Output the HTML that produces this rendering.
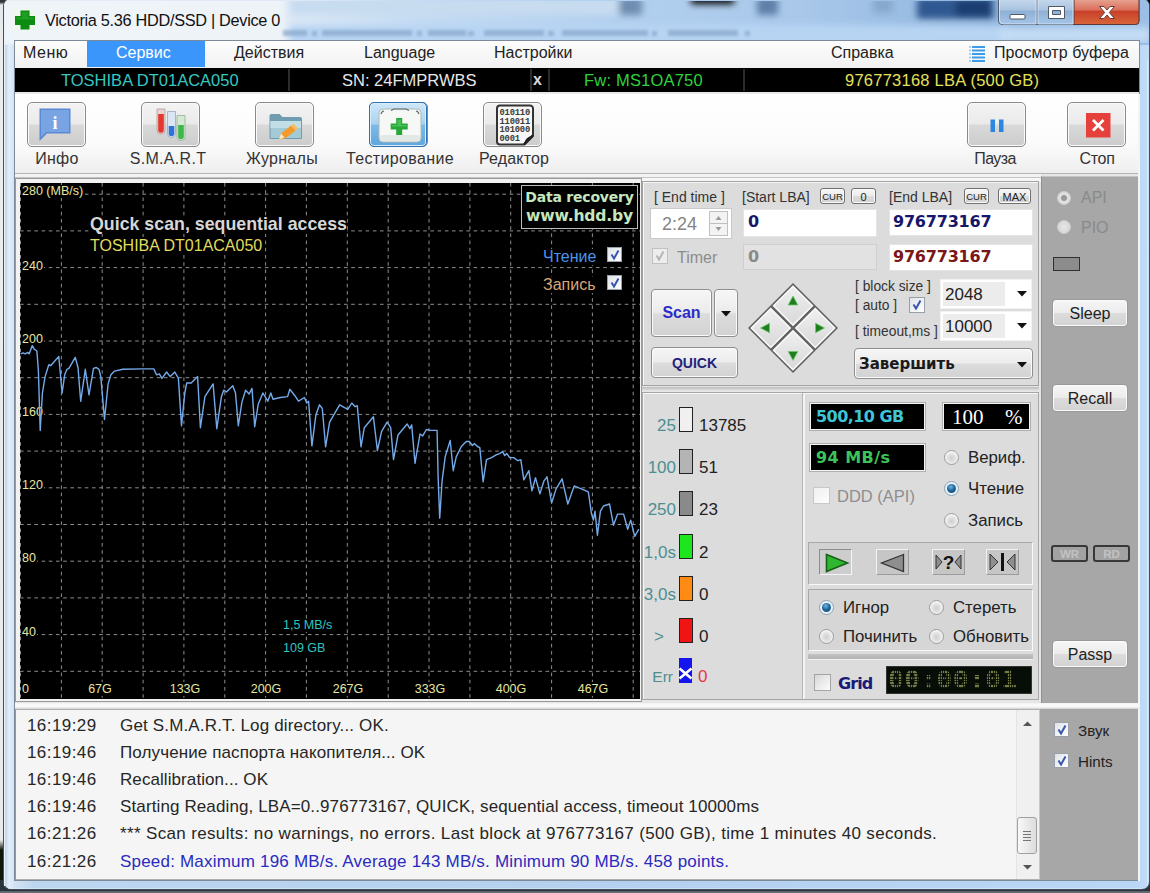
<!DOCTYPE html>
<html lang="ru"><head><meta charset="utf-8"><title>Victoria 5.36 HDD/SSD | Device 0</title>
<style>
*{box-sizing:border-box;margin:0;padding:0}
html,body{width:1150px;height:893px;overflow:hidden}
body{position:relative;background:#e9edf1;font-family:"Liberation Sans","DejaVu Sans",sans-serif;font-size:16px;color:#222}
.a{position:absolute}
.t{position:absolute;white-space:nowrap;line-height:1}
#win{left:3px;top:-2px;width:1147px;height:892px;border-radius:8px;border:1px solid #46505a;background:linear-gradient(90deg,#b4cbe8 0,#e4eef9 5px,#d4e3f4 10px,#bdd6f0 30px,#b4d0ee 600px,#b9d6f5 1130px,#c4ddf7 1147px);overflow:hidden}
#titlebg{left:-4px;top:0;width:1150px;height:46px;background:linear-gradient(90deg,#e6eef7 0px,#dfeaf6 280px,#c4dbf3 420px,#b3d0ef 600px,#a9c8ea 800px,#8db4de 1000px,#9cbfe6 1150px)}
#client{left:14px;top:40px;width:1126px;height:841px;background:#d9d9d9;border:1px solid #7d8a99}
.btn{position:absolute;border:1px solid #8e8e8e;border-radius:4px;background:linear-gradient(#f6f6f6 0%,#ececec 48%,#dcdcdc 52%,#d2d2d2 100%);box-shadow:inset 0 0 0 1px #fbfbfb}
.btn .t{left:0;right:0;text-align:center}
.tb{position:absolute;width:59px;height:45px;border:1px solid #8a8a8a;border-radius:5px;background:linear-gradient(#f3f3f3 0%,#eaeaea 49%,#d9d9d9 51%,#cccccc 100%);box-shadow:inset 0 0 0 1px #fafafa}
.tbl{position:absolute;white-space:nowrap;line-height:1;font-size:16px;color:#333;text-align:center;width:140px;letter-spacing:.3px}
.lbl{position:absolute;white-space:nowrap;line-height:1;font-size:14px;color:#333}
.inp{position:absolute;background:#fff;border:1px solid #e4e4e4}
.num{position:absolute;white-space:nowrap;line-height:1;font-family:"DejaVu Sans","Liberation Sans",sans-serif;font-weight:bold;font-size:16px;letter-spacing:-0.2px}
.radio{position:absolute;width:15px;height:15px;border-radius:50%;border:1px solid #9c9c9c;background:radial-gradient(circle at 50% 55%,#cfcfcf 0%,#e2e2e2 40%,#fafafa 75%,#f0f0f0 100%)}
.radio.on{background:radial-gradient(circle at 50% 50%,#e6f2fa 0%,#e9f3fa 70%,#cfdfea 100%);border-color:#8fa2b2}
.radio.on::after{content:"";position:absolute;left:2px;top:2px;width:9px;height:9px;border-radius:50%;background:radial-gradient(circle at 42% 32%,#6fb6e2 0%,#22699c 45%,#123f66 100%)}
.cb{position:absolute;width:16px;height:16px;border:1px solid #9aa0a8;background:linear-gradient(135deg,#dfe3e8,#ffffff)}
.cb svg{position:absolute;left:1px;top:1px}
.bar{position:absolute;width:14px;height:25px;border:1px solid #222}
.stl{position:absolute;white-space:nowrap;line-height:1;font-size:17px;color:#4d8f90;text-align:right;width:40px}
.stv{position:absolute;white-space:nowrap;line-height:1;font-size:17px;color:#222}
.disp{position:absolute;background:#000;border:1px solid #f4f4f4;outline:1px solid #b0b0b0}
.sunk{position:absolute;border:1px solid;border-color:#a9a9a9 #f8f8f8 #f8f8f8 #a9a9a9}
.pbtn{position:absolute;width:33px;height:26px;background:#c6c6c6;border:1px solid;border-color:#f2f2f2 #9c9c9c #9c9c9c #f2f2f2}
.log{position:absolute;white-space:nowrap;line-height:1;font-size:17px;color:#262626}
</style></head>
<body>
<div class="a" style="left:0;top:0;width:8px;height:893px;background:linear-gradient(#30353a 0,#30353a 2px,#e4e6e8 5px,#ececec 40px,#e9e9e9 840px,#10180c 850px,#10180c 880px,#6a737b 890px)"></div>
<div class="a" style="left:1140px;top:0;width:10px;height:893px;background:linear-gradient(#05070a 0,#0a0e14 40px,#5e6f84 60px,#b9cde2 90px,#a7bdd6 170px,#6f8196 200px,#a9c3de 240px,#bdd7f1 500px,#b2cfee 840px,#4c5866 880px,#2a3038 893px)"></div>
<div class="a" style="left:0;top:880px;width:1150px;height:13px;background:linear-gradient(#2c333a 0,#2c333a 11px,#5c656e 11.5px,#6a737c 13px)"></div>
<div class="a" id="win"><div class="a" id="titlebg"></div>
<svg class="a" style="left:-4px;top:2px" width="1150" height="42" viewBox="0 0 1150 42">
<defs><filter id="bl" x="-20%" y="-80%" width="140%" height="260%"><feGaussianBlur stdDeviation="3.5"/></filter>
<filter id="bl2" x="-20%" y="-50%" width="140%" height="200%"><feGaussianBlur stdDeviation="1.8"/></filter></defs>
<g filter="url(#bl)">
<rect x="0" y="-6" width="285" height="50" fill="#f0f4f9" opacity="0.92"/>
<rect x="290" y="-4" width="330" height="18" fill="#c8dcf0"/>
<rect x="619" y="-4" width="23" height="18" fill="#6d8db0"/>
<rect x="691" y="-6" width="43" height="9" fill="#000"/>
<rect x="757" y="-4" width="21" height="18" fill="#5f7fa8"/>
<rect x="873" y="-4" width="20" height="16" fill="#86a8cc"/>
<rect x="917" y="-4" width="76" height="22" fill="#2f5890"/>
<rect x="956" y="-2" width="36" height="18" fill="#1e3e70"/>
<rect x="290" y="24" width="720" height="20" fill="#b7d4f3"/>
<rect x="1000" y="26" width="150" height="16" fill="#c3dbf4"/>
</g>
<g filter="url(#bl2)" fill="#86a4c8" opacity="0.7">
<rect x="283" y="29" width="24" height="6"/><rect x="322" y="29" width="90" height="6"/><rect x="428" y="29" width="38" height="6"/><rect x="484" y="29" width="60" height="6"/><rect x="562" y="29" width="86" height="6"/><rect x="668" y="29" width="70" height="6"/>
<rect x="468" y="30" width="6" height="5"/><rect x="548" y="30" width="6" height="5"/><rect x="312" y="30" width="5" height="5"/><rect x="417" y="30" width="5" height="5"/><rect x="652" y="30" width="5" height="5"/><rect x="745" y="30" width="5" height="5"/>
</g>
</svg></div>
<div class="a" style="left:4px;top:6px;width:1px;height:880px;background:#e8f2fb"></div>
<div class="a" style="left:1147px;top:60px;width:1px;height:826px;background:#dcecfb;opacity:.8"></div>
<div class="a" style="left:8px;top:888px;width:1134px;height:1px;background:#dcecfb;opacity:.6"></div>
<svg class="a" style="left:14px;top:9px" width="22" height="21" viewBox="0 0 22 21"><rect width="22" height="21" fill="#eef6ee"/><path d="M6.5 1.5h9v5.5h5.5v9h-5.5v4.5h-9v-4.5h-5.5v-9h5.5z" fill="#0d8c12"/><path d="M8 3h6v5.5h5.5v2h-17v-2h5.5z" fill="#2fae30" opacity=".55"/></svg>
<div class="t" style="left:45px;top:12px;font-size:16.3px;color:#111;letter-spacing:-0.3px">Victoria 5.36 HDD/SSD | Device 0</div>
<svg class="a" style="left:997px;top:0" width="146" height="28" viewBox="0 0 146 28">
<defs>
<linearGradient id="cg" x1="0" y1="0" x2="0" y2="1"><stop offset="0" stop-color="#c9dbee"/><stop offset=".45" stop-color="#a9c3e0"/><stop offset=".5" stop-color="#8fb0d6"/><stop offset="1" stop-color="#a6c6e8"/></linearGradient>
<linearGradient id="cr" x1="0" y1="0" x2="0" y2="1"><stop offset="0" stop-color="#e9a99a"/><stop offset=".45" stop-color="#d9705a"/><stop offset=".5" stop-color="#c8402a"/><stop offset="1" stop-color="#d8663a"/></linearGradient>
</defs>
<path d="M1.5 -2V21a3.5 3.5 0 0 0 3.5 3.5H138.5a3.5 3.5 0 0 0 3.5 -3.5V-2z" fill="url(#cg)" stroke="#4f5d6e" stroke-width="1"/>
<path d="M77 -2V24.5H138.5a3.5 3.5 0 0 0 3.5 -3.5V-2z" fill="url(#cr)" stroke="#5a3a36" stroke-width="1"/>
<path d="M40 -2V24.5" stroke="#4f5d6e" stroke-width="1"/>
<path d="M2.5 -2V20a4 4 0 0 0 4 4H39V-2z M41 -2V24H76V-2z" fill="none" stroke="#e6f0fa" stroke-width="1" opacity=".7"/>
<rect x="13" y="14.5" width="15" height="4.5" rx="1" fill="#fff" stroke="#505a66" stroke-width="1"/>
<path d="M51.5 6.5h16v12h-16z M55.5 10.5v4h8v-4z" fill="#fff" fill-rule="evenodd" stroke="#505a66" stroke-width="1"/>
<path d="M102.5 6.5l4.5 0 3 3.5 3 -3.5 4.5 0 -5.2 6 5.2 6 -4.5 0 -3 -3.5 -3 3.5 -4.5 0 5.2 -6z" fill="#fff" stroke="#6a3a36" stroke-width="1"/>
</svg>
<div class="a" id="client"></div>
<div class="a" style="left:15px;top:41px;width:1124px;height:27px;background:linear-gradient(#fdfdfd,#f1f1f1)"></div>
<div class="a" style="left:87px;top:41px;width:118px;height:26px;background:#3a96fb"></div>
<div class="t" style="left:23px;top:45px;font-size:16px;color:#222;letter-spacing:0.5px">Меню</div>
<div class="t" style="left:116px;top:45px;font-size:16px;color:#ffffff;letter-spacing:0px">Сервис</div>
<div class="t" style="left:234px;top:45px;font-size:16px;color:#222;letter-spacing:0px">Действия</div>
<div class="t" style="left:364px;top:45px;font-size:16px;color:#222;letter-spacing:0px">Language</div>
<div class="t" style="left:494px;top:45px;font-size:16px;color:#222;letter-spacing:0px">Настройки</div>
<div class="t" style="left:831px;top:45px;font-size:16px;color:#222;letter-spacing:0px">Справка</div>
<div class="t" style="left:994px;top:45px;font-size:16px;color:#222;letter-spacing:0.07px">Просмотр буфера</div>
<svg class="a" style="left:968px;top:45px" width="18" height="20" viewBox="0 0 18 20"><g stroke="#3b9be8" stroke-width="2"><path d="M4 2h13M4 5.5h13M4 9h13M4 12.5h13M4 16h13"/></g><g stroke="#8cc4f2" stroke-width="1.5"><path d="M1 2h2M1 5.5h2M1 9h2M1 12.5h2M1 16h2"/></g></svg>
<div class="a" style="left:15px;top:68px;width:1124px;height:24px;background:#000"></div>
<div class="a" style="left:288px;top:69px;width:2px;height:22px;background:#2c2c2c"></div>
<div class="a" style="left:530px;top:69px;width:2px;height:22px;background:#2c2c2c"></div>
<div class="a" style="left:548px;top:69px;width:2px;height:22px;background:#2c2c2c"></div>
<div class="a" style="left:743px;top:69px;width:2px;height:22px;background:#2c2c2c"></div>
<div class="t" style="left:61px;top:72px;font-size:16.5px;color:#35c7c0">TOSHIBA DT01ACA050</div>
<div class="t" style="left:342px;top:72px;font-size:16.5px;color:#e8e8e8">SN: 24FMPRWBS</div>
<div class="t" style="left:533px;top:72px;font-size:16px;color:#d8d8d8;font-weight:bold">x</div>
<div class="t" style="left:584px;top:72px;font-size:16.5px;letter-spacing:.2px;color:#2fd23a">Fw: MS1OA750</div>
<div class="t" style="left:845px;top:72px;font-size:16.5px;letter-spacing:.24px;color:#e6e05a">976773168 LBA (500 GB)</div>
<div class="a" style="left:15px;top:92px;width:1124px;height:2px;background:#e9e9e9"></div>
<div class="a" style="left:15px;top:94px;width:1124px;height:80px;background:linear-gradient(#ffffff 0,#fbfbfb 50px,#eeeeee 80px)"></div>
<div class="a" style="left:15px;top:173px;width:1124px;height:1px;background:#b4b4b4"></div>
<div class="tb" style="left:27px;top:102px"></div>
<svg class="a" style="left:27px;top:102px" width="58" height="45" viewBox="0 0 58 45"><path d="M12.5 6.5h31v25h-23.5l-7.5 7.5z" fill="#5a8ad4"/><path d="M14 8h28v22h-23l-5 5z" fill="#78a4e4"/><text x="28" y="27" font-family="Liberation Serif,serif" font-weight="bold" font-size="18" fill="#fff" text-anchor="middle">i</text></svg>
<div class="tbl" style="left:-13px;top:151px;letter-spacing:0.3px">Инфо</div>
<div class="tb" style="left:141px;top:102px"></div>
<svg class="a" style="left:141px;top:102px" width="58" height="45" viewBox="0 0 58 45"><g><path d="M16 7h8v21a4 4 0 0 1 -8 0z" fill="#ecd2d2" stroke="#b49c9c" stroke-width=".8"/><path d="M17.2 12h5.6v16a2.8 2.8 0 0 1 -5.6 0z" fill="#e2382e"/>
<path d="M26.5 9.5h8v22a4 4 0 0 1 -8 0z" fill="#dbe6f4" stroke="#98a8c0" stroke-width=".8"/><path d="M27.7 24h5.6v7.5a2.8 2.8 0 0 1 -5.6 0z" fill="#2d74d6"/>
<path d="M36 13.5h8v21a4 4 0 0 1 -8 0z" fill="#d4ead4" stroke="#94b094" stroke-width=".8"/><path d="M37.2 23h5.6v11.5a2.8 2.8 0 0 1 -5.6 0z" fill="#3cb848"/></g></svg>
<div class="tbl" style="left:98px;top:151px;letter-spacing:0.3px">S.M.A.R.T</div>
<div class="tb" style="left:255px;top:102px"></div>
<svg class="a" style="left:255px;top:102px" width="58" height="45" viewBox="0 0 58 45"><path d="M14.5 14a2 2 0 0 1 2 -2h8l3 3h17.5a2 2 0 0 1 2 2v19a1 1 0 0 1 -1 1h-30.5a1 1 0 0 1 -1 -1z" fill="#6f9cae"/><path d="M15.5 19h30.5v17h-30.5z" fill="#a4cad6"/><path d="M15.5 19h30.5v7h-30.5z" fill="#c2dfe8"/>
<path d="M24 37.5l2 -6 10 -8 4.5 5 -10.5 8z" fill="#f39a28"/><path d="M24 37.5l2 -6 3.5 4z" fill="#f6e6cc"/><path d="M36 23.5l2.5 -2 4.5 5 -2.5 2z" fill="#f8bc66"/></svg>
<div class="tbl" style="left:212px;top:151px;letter-spacing:0.3px">Журналы</div>
<div class="tb" style="left:369px;top:102px"></div>
<svg class="a" style="left:369px;top:102px" width="58" height="45" viewBox="0 0 58 45"><rect x="10" y="7" width="42" height="33" rx="4" fill="#f6f8f6" stroke="#aebcb8"/><path d="M12 12q1 -3 3 -3M50 12q-1 -3 -3 -3M22 8.5l3 -1.5h12l3 1.5" fill="none" stroke="#5a6a66" stroke-width="1.2"/><rect x="11" y="33" width="40" height="6" rx="2" fill="#e3e9e6"/>
<path d="M27.2 16h6v5.5h5.5v6h-5.5v5.5h-6v-5.5h-5.5v-6h5.5z" fill="#25a838"/><path d="M28.5 17.5h3.5v5.5h5.5v1.5h-14.5v-1.5h5.5z" fill="#5fd068" opacity=".6"/></svg>
<div class="tbl" style="left:330px;top:151px;letter-spacing:0.36px">Тестирование</div>
<div class="tb" style="left:483px;top:102px"></div>
<svg class="a" style="left:483px;top:102px" width="58" height="45" viewBox="0 0 58 45"><path d="M17 3.5h30a3 3 0 0 1 3 3v27l-9 9h-24a3 3 0 0 1 -3 -3v-33a3 3 0 0 1 3 -3z" fill="#f7f7f7" stroke="#333" stroke-width="2"/><path d="M50 33.5c-5 1 -8 3 -9 9z" fill="#222"/><path d="M50 33.5l-9 9" stroke="#222" stroke-width="2.5"/>
<g font-family="Liberation Mono,monospace" font-size="8.8" font-weight="bold" fill="#3a3a3a" letter-spacing="-.2"><text x="16.5" y="13">010110</text><text x="16.5" y="21.5">110011</text><text x="16.5" y="30">101000</text><text x="16.5" y="38.5">0001</text></g></svg>
<div class="tbl" style="left:444px;top:151px;letter-spacing:0.14px">Редактор</div>
<div class="tb" style="left:967px;top:102px"></div>
<svg class="a" style="left:967px;top:102px" width="58" height="45" viewBox="0 0 58 45"><rect x="23.5" y="17.5" width="4.5" height="12.5" fill="#2a86de"/><rect x="32" y="17.5" width="4.5" height="12.5" fill="#2a86de"/></svg>
<div class="tbl" style="left:925px;top:151px;letter-spacing:-0.6px">Пауза</div>
<div class="tb" style="left:1067px;top:102px"></div>
<svg class="a" style="left:1067px;top:102px" width="58" height="45" viewBox="0 0 58 45"><rect x="19" y="11" width="24.5" height="24.5" fill="#e6403c"/><path d="M26 18l10.5 10.5M36.5 18l-10.5 10.5" stroke="#fff" stroke-width="2.8"/></svg>
<div class="tbl" style="left:1027px;top:151px;letter-spacing:-0.3px">Стоп</div>
<div class="a" style="left:369px;top:102px;width:58px;height:45px;border:1px solid #2e72b4;border-radius:5px;background:linear-gradient(#cfe7f8 0%,#a9d3f1 49%,#7dbae8 51%,#5ea6de 100%);box-shadow:inset 0 0 0 1px #d8eefc"></div>
<svg class="a" style="left:369px;top:102px" width="58" height="45" viewBox="0 0 58 45"><rect x="10" y="7" width="42" height="33" rx="4" fill="#f6f8f6" stroke="#aebcb8"/><path d="M12 12q1 -3 3 -3M50 12q-1 -3 -3 -3M22 8.5l3 -1.5h12l3 1.5" fill="none" stroke="#5a6a66" stroke-width="1.2"/><rect x="11" y="33" width="40" height="6" rx="2" fill="#e3e9e6"/>
<path d="M27.2 16h6v5.5h5.5v6h-5.5v5.5h-6v-5.5h-5.5v-6h5.5z" fill="#25a838"/><path d="M28.5 17.5h3.5v5.5h5.5v1.5h-14.5v-1.5h5.5z" fill="#5fd068" opacity=".6"/></svg>
<div class="a" style="left:15px;top:174px;width:1124px;height:533px;background:#e6e6e6"></div>
<div class="a" style="left:15px;top:174px;width:1026px;height:8px;background:linear-gradient(#f6f6f6 0,#f2f2f2 3px,#c4c4c4 3px,#c4c4c4 4px,#f8f8f8 4px,#f4f4f4 8px)"></div>
<div class="a" style="left:15px;top:178px;width:627px;height:524px;background:#f2f2f2;border:1px solid #9a9a9a"></div>
<div class="a" style="left:20px;top:183px;width:620px;height:516px;background:#000"></div>
<svg class="a" style="left:20px;top:183px" width="620" height="516" viewBox="0 0 620 516"><g stroke="#8e8e8e" stroke-width="1" stroke-dasharray="3.6 3.6" fill="none"><path d="M0 11.2H620"/><path d="M0 47.9H620"/><path d="M0 84.6H620"/><path d="M0 121.3H620"/><path d="M0 158.0H620"/><path d="M0 194.7H620"/><path d="M0 231.4H620"/><path d="M0 268.1H620"/><path d="M0 304.8H620"/><path d="M0 341.5H620"/><path d="M0 378.2H620"/><path d="M0 414.9H620"/><path d="M0 451.6H620"/><path d="M0 488.3H620"/><path d="M0.5 0V516"/><path d="M41.4 0V516"/><path d="M82.2 0V516"/><path d="M123.1 0V516"/><path d="M163.9 0V516"/><path d="M204.8 0V516"/><path d="M245.6 0V516"/><path d="M286.4 0V516"/><path d="M327.3 0V516"/><path d="M368.2 0V516"/><path d="M409.0 0V516"/><path d="M449.9 0V516"/><path d="M490.7 0V516"/><path d="M531.6 0V516"/><path d="M572.4 0V516"/><path d="M613.2 0V516"/></g></svg>
<div class="t" style="left:21px;top:185px;font-size:12.5px;color:#e6e6a0;background:#000;padding:0 1px">280 (MB/s)</div>
<div class="t" style="left:21px;top:260px;font-size:12.5px;color:#e6e6a0;background:#000;padding:0 1px">240</div>
<div class="t" style="left:21px;top:333px;font-size:12.5px;color:#e6e6a0;background:#000;padding:0 1px">200</div>
<div class="t" style="left:21px;top:406px;font-size:12.5px;color:#e6e6a0;background:#000;padding:0 1px">160</div>
<div class="t" style="left:21px;top:479px;font-size:12.5px;color:#e6e6a0;background:#000;padding:0 1px">120</div>
<div class="t" style="left:21px;top:552px;font-size:12.5px;color:#e6e6a0;background:#000;padding:0 1px">80</div>
<div class="t" style="left:21px;top:626px;font-size:12.5px;color:#e6e6a0;background:#000;padding:0 1px">40</div>
<div class="t" style="left:21px;top:683px;font-size:12.5px;color:#e6e6a0;background:#000;padding:0 1px">0</div>
<div class="t" style="left:80px;top:683px;width:40px;text-align:center;font-size:12.5px;color:#e6e6a0"><span style="background:#000;padding:0 1px">67G</span></div>
<div class="t" style="left:165px;top:683px;width:40px;text-align:center;font-size:12.5px;color:#e6e6a0"><span style="background:#000;padding:0 1px">133G</span></div>
<div class="t" style="left:246px;top:683px;width:40px;text-align:center;font-size:12.5px;color:#e6e6a0"><span style="background:#000;padding:0 1px">200G</span></div>
<div class="t" style="left:328px;top:683px;width:40px;text-align:center;font-size:12.5px;color:#e6e6a0"><span style="background:#000;padding:0 1px">267G</span></div>
<div class="t" style="left:410px;top:683px;width:40px;text-align:center;font-size:12.5px;color:#e6e6a0"><span style="background:#000;padding:0 1px">333G</span></div>
<div class="t" style="left:491px;top:683px;width:40px;text-align:center;font-size:12.5px;color:#e6e6a0"><span style="background:#000;padding:0 1px">400G</span></div>
<div class="t" style="left:573px;top:683px;width:40px;text-align:center;font-size:12.5px;color:#e6e6a0"><span style="background:#000;padding:0 1px">467G</span></div>
<svg class="a" style="left:20px;top:183px" width="620" height="516" viewBox="0 0 620 516"><polyline fill="none" stroke="#74aaea" stroke-width="1.4" stroke-linejoin="round" points="0.5,170.8 3.2,169.9 5.0,170.8 7.8,169.5 9.2,170.8 12.3,162.6 14.2,166.2 16.9,168.0 18.4,188.1 20.2,247.5 22.4,210.0 25.1,193.6 28.8,181.7 30.6,182.7 38.8,173.5 42.1,210.0 44.7,191.8 47.0,186.3 48.9,185.4 55.3,174.4 58.0,184.5 60.7,218.3 65.3,186.3 69.0,211.9 73.5,185.4 76.3,184.5 79.0,186.3 80.8,193.6 84.5,236.5 88.1,200.9 90.9,191.8 94.5,188.1 102.7,186.3 122.8,185.9 133.8,185.9 136.5,191.8 139.3,190.9 142.0,195.4 146.6,189.0 150.2,193.6 154.8,189.0 158.4,195.4 161.5,242.9 164.8,210.0 166.7,200.0 171.2,200.0 177.6,193.6 180.4,244.7 184.9,213.7 193.1,200.9 196.8,245.7 201.4,213.7 203.7,207.2 206.4,209.0 212.8,202.7 215.5,210.0 218.3,242.8 221.9,219.1 225.6,207.2 229.2,210.9 232.0,205.4 234.7,243.7 238.3,220.9 242.9,210.0 247.8,218.2 250.8,210.0 253.0,216.3 260.3,214.5 267.6,213.6 269.8,206.3 274.9,212.7 278.5,218.2 284.4,214.5 286.7,220.0 288.6,218.2 291.9,262.9 295.9,231.9 299.5,221.8 302.3,225.5 305.6,263.8 309.6,239.2 319.6,221.8 327.8,226.4 331.8,220.0 335.1,223.7 337.3,222.7 341.0,263.8 344.3,244.7 353.4,233.7 357.4,267.5 361.6,248.3 367.1,239.2 370.7,244.7 373.5,276.6 378.0,252.0 387.2,241.0 389.9,245.6 391.7,241.9 395.0,280.3 400.0,251.0 402.7,252.9 406.4,246.5 410.0,247.4 417.1,247.4 418.1,293.8 419.7,335.1 422.1,297.8 425.2,273.6 430.2,257.5 433.2,287.7 436.3,273.6 441.3,263.5 446.3,258.5 449.4,258.5 452.4,262.5 454.4,260.5 457.4,263.5 459.8,264.6 463.1,298.8 466.5,276.7 471.5,274.6 476.6,271.6 479.6,270.6 482.6,268.6 484.7,272.6 486.7,270.6 489.7,274.6 493.7,274.6 497.8,277.7 500.8,276.7 503.8,296.8 508.9,287.7 511.9,307.9 515.5,294.8 519.9,310.9 524.0,297.8 527.0,293.8 531.6,320.0 536.1,305.9 542.1,295.8 547.8,321.0 554.2,302.9 561.3,305.9 568.3,308.9 571.4,330.1 573.4,337.1 575.0,328.1 577.4,352.3 580.4,328.1 583.5,323.0 589.5,321.0 593.5,342.2 597.6,331.1 603.6,331.1 607.7,346.2 610.7,337.1 614.7,353.3 618.8,346.2"/></svg>
<div class="t" style="left:90px;top:216px;font-size:17.8px;font-weight:bold;color:#d6d6d6;background:#000">Quick scan, sequential access</div>
<div class="t" style="left:90px;top:238px;font-size:16px;color:#e0dc5c;background:#000">TOSHIBA DT01ACA050</div>
<div class="a" style="left:521px;top:185px;width:117px;height:44px;background:#000;border:1.5px solid #bdbdbd"></div>
<div class="t" style="left:521px;top:188px;width:117px;text-align:center;font-family:'DejaVu Sans','Liberation Sans',sans-serif;font-weight:bold;font-size:14px;color:#c6e6be;line-height:18.5px;white-space:normal;letter-spacing:-0.2px">Data recovery<br><span style="font-size:15.6px">www.hdd.by</span></div>
<div class="t" style="left:543px;top:249px;font-size:16px;color:#4a94ea;background:#000">Чтение</div>
<div class="t" style="left:543px;top:277px;font-size:16px;color:#d8a878;background:#000">Запись</div>
<div class="cb" style="left:607px;top:247px;width:15px;height:15px"><svg width="12" height="12" viewBox="0 0 12 12"><path d="M2.5 5.5l2.5 4 4.5 -8" fill="none" stroke="#3a56b0" stroke-width="2"/></svg></div>
<div class="cb" style="left:607px;top:275px;width:15px;height:15px"><svg width="12" height="12" viewBox="0 0 12 12"><path d="M2.5 5.5l2.5 4 4.5 -8" fill="none" stroke="#3a56b0" stroke-width="2"/></svg></div>
<div class="t" style="left:283px;top:619px;font-size:12.5px;color:#2fc4c0;background:#000">1,5 MB/s</div>
<div class="t" style="left:283px;top:642px;font-size:12.5px;color:#2fc4c0;background:#000">109 GB</div>
<div class="a" style="left:642px;top:181px;width:397px;height:205px;background:#dcdcdc;border:1px solid #a2a2a2;box-shadow:inset 1px 1px 0 #f6f6f6"></div>
<div class="lbl" style="left:654px;top:190px;font-size:14px">[ End time ]</div>
<div class="lbl" style="left:742px;top:190px;font-size:14px">[Start LBA]</div>
<div class="lbl" style="left:889px;top:190px;font-size:14px">[End LBA]</div>
<div class="btn" style="left:820px;top:188px;width:25px;height:16px;border-color:#707070;border-radius:3px"><div class="t" style="top:3px;font-size:9.5px;color:#222">CUR</div></div>
<div class="btn" style="left:851px;top:188px;width:25px;height:16px;border-color:#707070;border-radius:3px"><div class="t" style="top:3px;font-size:11px;color:#222">0</div></div>
<div class="btn" style="left:964px;top:188px;width:25px;height:16px;border-color:#707070;border-radius:3px"><div class="t" style="top:3px;font-size:9.5px;color:#222">CUR</div></div>
<div class="btn" style="left:998px;top:188px;width:33px;height:16px;border-color:#707070;border-radius:3px"><div class="t" style="top:3px;font-size:11px;color:#222">MAX</div></div>
<div class="inp" style="left:650px;top:208px;width:82px;height:31px;border-color:#c9c9c9"></div>
<div class="t" style="left:662px;top:215px;font-size:18px;color:#858585">2:24</div>
<div class="a" style="left:709px;top:211px;width:19px;height:25px;border:1px solid #c0c0c0;background:#f3f3f3"></div>
<div class="a" style="left:710px;top:223px;width:17px;height:1px;background:#c0c0c0"></div>
<svg class="a" style="left:709px;top:211px" width="19" height="25"><path d="M6.5 9l3 -4 3 4z M6.5 16l3 4 3 -4z" fill="#9a9a9a"/></svg>
<div class="inp" style="left:743px;top:209px;width:134px;height:28px"></div>
<div class="num" style="left:748px;top:214px;color:#16166a">0</div>
<div class="inp" style="left:889px;top:209px;width:144px;height:27px"></div>
<div class="num" style="left:893px;top:214px;color:#16166a">976773167</div>
<div class="inp" style="left:743px;top:244px;width:134px;height:26px;background:#e2e2e2;border-color:#cfcfcf"></div>
<div class="num" style="left:748px;top:249px;color:#8a8a8a">0</div>
<div class="inp" style="left:889px;top:244px;width:144px;height:27px"></div>
<div class="num" style="left:893px;top:249px;color:#7a1616">976773167</div>
<div class="cb" style="left:652px;top:248px;border-color:#c2c2c2;background:#ededed"><svg width="12" height="12" viewBox="0 0 12 12"><path d="M2.5 5.5l2.5 4 4.5 -8" fill="none" stroke="#b4b4b4" stroke-width="2"/></svg></div>
<div class="t" style="left:677px;top:250px;font-size:16px;color:#8c8c8c">Timer</div>
<div class="btn" style="left:651px;top:289px;width:61px;height:48px"><div class="t" style="top:15px;font-size:16px;font-weight:bold;color:#2c2cc8">Scan</div></div>
<div class="btn" style="left:714px;top:289px;width:24px;height:48px"></div>
<svg class="a" style="left:714px;top:289px" width="24" height="48"><path d="M7 22h10l-5 5.5z" fill="#111"/></svg>
<div class="btn" style="left:651px;top:347px;width:87px;height:31px"><div class="t" style="top:8px;font-size:14px;font-weight:bold;color:#22227a">QUICK</div></div>
<svg class="a" style="left:744.5px;top:279.5px" width="96" height="96" viewBox="-48 -48 96 96">
<defs><linearGradient id="dg" x1="0" y1="0" x2="1" y2="1"><stop offset="0" stop-color="#f0f0f0"/><stop offset="1" stop-color="#d8d8d8"/></linearGradient></defs>
<g transform="rotate(45)">
<rect x="-31.8" y="-31.8" width="63.6" height="63.6" fill="#636363"/>
<rect x="-29.5" y="-29.5" width="27.5" height="27.5" fill="url(#dg)" stroke="#fbfbfb" stroke-width="1.5"/>
<rect x="2" y="-29.5" width="27.5" height="27.5" fill="url(#dg)" stroke="#fbfbfb" stroke-width="1.5"/>
<rect x="-29.5" y="2" width="27.5" height="27.5" fill="url(#dg)" stroke="#fbfbfb" stroke-width="1.5"/>
<rect x="2" y="2" width="27.5" height="27.5" fill="url(#dg)" stroke="#fbfbfb" stroke-width="1.5"/>
</g>
<g fill="#1f7f1f" stroke="#6cc86c" stroke-width=".8">
<path d="M0 -32l4.8 9h-9.6z"/><path d="M0 32.5l4.8 -9h-9.6z"/><path d="M-32.5 0l9 -4.8v9.6z"/><path d="M31.5 0l-9 -4.8v9.6z"/>
</g></svg>
<div class="lbl" style="left:855px;top:279.5px;font-size:13.8px">[ block size ]</div>
<div class="lbl" style="left:855px;top:299px;font-size:13.8px">[ auto ]</div>
<div class="lbl" style="left:855px;top:324.5px;font-size:13.8px">[ timeout,ms ]</div>
<div class="cb" style="left:909px;top:297px"><svg width="12" height="12" viewBox="0 0 12 12"><path d="M2.5 5.5l2.5 4 4.5 -8" fill="none" stroke="#3a56b0" stroke-width="2"/></svg></div>
<div class="inp" style="left:940px;top:279px;width:92px;height:30px;border-color:#f2f2f2"></div>
<div class="a" style="left:943px;top:282px;width:62px;height:24px;background:#ececec"></div>
<div class="t" style="left:945px;top:285.5px;font-size:17px;color:#222">2048</div>
<svg class="a" style="left:1015px;top:290px" width="14" height="8"><path d="M2 1h10l-5 5.5z" fill="#111"/></svg>
<div class="inp" style="left:940px;top:311px;width:92px;height:30px;border-color:#f2f2f2"></div>
<div class="a" style="left:943px;top:314px;width:62px;height:24px;background:#ececec"></div>
<div class="t" style="left:945px;top:317.5px;font-size:17px;color:#222">10000</div>
<svg class="a" style="left:1015px;top:322px" width="14" height="8"><path d="M2 1h10l-5 5.5z" fill="#111"/></svg>
<div class="btn" style="left:854px;top:348px;width:179px;height:31px"><div class="t" style="left:4px;right:auto;top:8px;font-size:15px;font-weight:bold;color:#1a1a1a;font-family:'DejaVu Sans','Liberation Sans',sans-serif">Завершить</div></div>
<svg class="a" style="left:1015px;top:361px" width="14" height="8"><path d="M2 1h10l-5 5.5z" fill="#111"/></svg>
<div class="a" style="left:642px;top:387px;width:397px;height:4px;background:linear-gradient(#bcbcbc,#e6e6e6)"></div>
<div class="a" style="left:642px;top:392px;width:397px;height:308px;background:#dcdcdc;border:1px solid #a6a6a6;box-shadow:inset 1px 1px 0 #f6f6f6"></div>
<div class="a" style="left:802px;top:393px;width:1px;height:306px;background:#b6b6b6"></div>
<div class="a" style="left:803px;top:393px;width:2px;height:306px;background:#f4f4f4"></div>
<div class="stl" style="left:636px;top:417px">25</div>
<div class="bar" style="left:679px;top:407px;background:#f0f0f0"></div>
<div class="stv" style="left:699px;top:417px">13785</div>
<div class="stl" style="left:636px;top:459px">100</div>
<div class="bar" style="left:679px;top:449px;background:#b4b4b4"></div>
<div class="stv" style="left:699px;top:459px">51</div>
<div class="stl" style="left:636px;top:501px">250</div>
<div class="bar" style="left:679px;top:491px;background:#8a8a8a"></div>
<div class="stv" style="left:699px;top:501px">23</div>
<div class="stl" style="left:636px;top:544px">1,0s</div>
<div class="bar" style="left:679px;top:534px;background:#1ee61e"></div>
<div class="stv" style="left:699px;top:544px">2</div>
<div class="stl" style="left:636px;top:586px">3,0s</div>
<div class="bar" style="left:679px;top:576px;background:#ff8a14"></div>
<div class="stv" style="left:699px;top:586px">0</div>
<div class="stl" style="left:624px;top:628px">&gt;</div>
<div class="bar" style="left:679px;top:618px;background:#f01414"></div>
<div class="stv" style="left:699px;top:628px">0</div>
<div class="stl" style="left:633px;top:669px;font-size:15.5px">Err</div>
<div class="a" style="left:679px;top:658px;width:13px;height:25px;background:#1414ee"></div>
<svg class="a" style="left:679px;top:667px" width="13" height="13"><path d="M0.5 1.5l12 10M12.5 1.5l-12 10" stroke="#fff" stroke-width="2.6"/></svg>
<div class="stv" style="left:698px;top:668px;color:#e83848">0</div>
<div class="disp" style="left:810px;top:403px;width:115px;height:27px"></div>
<div class="t" style="left:816px;top:409px;font-family:'DejaVu Sans','Liberation Sans',sans-serif;font-weight:bold;font-size:16px;color:#3fc6d6;letter-spacing:-0.55px">500,10 GB</div>
<div class="disp" style="left:943px;top:403px;width:87px;height:27px"></div>
<div class="t" style="left:952px;top:406.5px;font-family:'Liberation Serif',serif;font-size:21px;color:#fff">100</div>
<div class="t" style="left:1005px;top:406.5px;font-family:'Liberation Serif',serif;font-size:21px;color:#fff">%</div>
<div class="disp" style="left:810px;top:444px;width:115px;height:27px"></div>
<div class="t" style="left:816px;top:450px;font-family:'DejaVu Sans','Liberation Sans',sans-serif;font-weight:bold;font-size:16px;color:#3cc45a;letter-spacing:.45px">94 MB/s</div>
<div class="radio" style="left:943.5px;top:449.5px"></div>
<div class="t" style="left:968px;top:449.5px;font-size:16.8px;color:#222">Вериф.</div>
<div class="radio on" style="left:943.5px;top:480.5px"></div>
<div class="t" style="left:968px;top:480.5px;font-size:16.8px;color:#222">Чтение</div>
<div class="radio" style="left:943.5px;top:512.5px"></div>
<div class="t" style="left:968px;top:512.5px;font-size:16.8px;color:#222">Запись</div>
<div class="cb" style="left:813px;top:487px;width:17px;height:17px;border-color:#c8c8c8;background:linear-gradient(135deg,#f0f0f0,#fdfdfd)"></div>
<div class="t" style="left:837px;top:488px;font-size:16.5px;color:#8e8e8e">DDD (API)</div>
<div class="sunk" style="left:808px;top:542px;width:225px;height:43px;background:#d2d2d2"></div>
<div class="pbtn" style="left:819px;top:549px;border-color:#8c8c8c #f6f6f6 #f6f6f6 #8c8c8c;background:#cdcdcd"><svg width="33" height="26" viewBox="0 0 33 26" style="position:absolute;left:-1px;top:-1px"><path d="M7.5 5.5l21 8.5 -21 8.5z" fill="#2fb82f" stroke="#176017" stroke-width="1.6"/></svg></div>
<div class="pbtn" style="left:876px;top:549px;"><svg width="33" height="26" viewBox="0 0 33 26" style="position:absolute;left:-1px;top:-1px"><path d="M27.5 5.5l-22 8.5 22 8.5z" fill="#8e8e8e" stroke="#333" stroke-width="1.3"/></svg></div>
<div class="pbtn" style="left:932px;top:549px;"><svg width="33" height="26" viewBox="0 0 33 26" style="position:absolute;left:-1px;top:-1px"><path d="M4 6l6 7 -6 7z" fill="#8e8e8e" stroke="#333" stroke-width="1"/><path d="M29 6l-6 7 6 7z" fill="#8e8e8e" stroke="#333" stroke-width="1"/><text x="16.5" y="20" font-family="Liberation Sans,sans-serif" font-weight="bold" font-size="19" text-anchor="middle" fill="#111">?</text></svg></div>
<div class="pbtn" style="left:986px;top:549px;"><svg width="33" height="26" viewBox="0 0 33 26" style="position:absolute;left:-1px;top:-1px"><path d="M4 5l8 8 -8 8z" fill="#8e8e8e" stroke="#333" stroke-width="1"/><path d="M29 5l-8 8 8 8z" fill="#8e8e8e" stroke="#333" stroke-width="1"/><rect x="15" y="4" width="3" height="18" fill="#111"/></svg></div>
<div class="sunk" style="left:808px;top:589px;width:225px;height:62px;background:#d6d6d6"></div>
<div class="radio on" style="left:818.5px;top:599.5px"></div>
<div class="t" style="left:843px;top:599.5px;font-size:16.8px;color:#222">Игнор</div>
<div class="radio" style="left:928.5px;top:599.5px"></div>
<div class="t" style="left:953px;top:599.5px;font-size:16.8px;color:#222">Стереть</div>
<div class="radio" style="left:818.5px;top:629.0px"></div>
<div class="t" style="left:843px;top:629.0px;font-size:16.8px;color:#222">Починить</div>
<div class="radio" style="left:928.5px;top:629.0px"></div>
<div class="t" style="left:953px;top:629.0px;font-size:16.8px;color:#222">Обновить</div>
<div class="a" style="left:808px;top:654px;width:225px;height:6px;background:linear-gradient(#c2c2c2,#b4b4b4);border-bottom:1px solid #f0f0f0"></div>
<div class="cb" style="left:814px;top:674px;width:17px;height:17px;border-color:#a4a4a4;background:linear-gradient(135deg,#d8d8d8,#fdfdfd)"></div>
<div class="t" style="left:838px;top:676px;font-size:16px;font-weight:bold;color:#1a1a78;font-family:'DejaVu Sans','Liberation Sans',sans-serif;letter-spacing:-0.9px">Grid</div>
<div class="a" style="left:886px;top:666px;width:146px;height:28px;background:#070d07;border:1px solid #333"></div>
<div class="t" style="left:888px;top:669.5px;font-family:'DejaVu Sans Mono','Liberation Mono',monospace;font-size:21px;font-weight:bold;color:#737c45;letter-spacing:.3px;transform:scale(1.25,1.22);transform-origin:0 50%">00:00:01</div>
<div class="a" style="left:887px;top:667px;width:144px;height:26px;background:repeating-linear-gradient(90deg,rgba(7,13,7,.8) 0,rgba(7,13,7,.8) .8px,transparent .8px,transparent 2.3px),repeating-linear-gradient(0deg,rgba(7,13,7,.8) 0,rgba(7,13,7,.8) .9px,transparent .9px,transparent 2.7px)"></div>
<div class="a" style="left:1041px;top:176px;width:97px;height:528px;background:#a7a7a7;border-left:1px solid #8e8e8e;border-top:1px solid #c4c4c4"></div>
<div class="a" style="left:1138px;top:94px;width:2px;height:787px;background:#f4f4f4"></div>
<div class="radio" style="left:1057px;top:191px;width:14px;height:14px;border-color:#cfcfcf;background:radial-gradient(circle,#9a9a9a 0,#9a9a9a 30%,#e0e0e0 40%,#dcdcdc 100%)"></div>
<div class="t" style="left:1081px;top:190px;font-size:16px;color:#8a8a8a">API</div>
<div class="radio" style="left:1057px;top:220px;width:14px;height:14px;border-color:#cfcfcf;background:radial-gradient(circle,#e8e8e8 0,#d0d0d0 100%)"></div>
<div class="t" style="left:1081px;top:220px;font-size:16px;color:#8a8a8a">PIO</div>
<div class="a" style="left:1053px;top:257px;width:27px;height:14px;background:#8c8c8c;border:1.5px solid #303030"></div>
<div class="btn" style="left:1052px;top:299px;width:76px;height:28px;border-color:#9a9a9a"><div class="t" style="top:5.5px;font-size:16px;color:#222">Sleep</div></div>
<div class="btn" style="left:1052px;top:384px;width:76px;height:28px;border-color:#9a9a9a"><div class="t" style="top:5.5px;font-size:16px;color:#222">Recall</div></div>
<div class="btn" style="left:1052px;top:640px;width:76px;height:28px;border-color:#9a9a9a"><div class="t" style="top:5.5px;font-size:16px;color:#222">Passp</div></div>
<div class="a" style="left:1051px;top:545px;width:37px;height:17px;border:2px solid #383838;border-radius:3px;background:#a2a2a2"><div class="t" style="left:0;right:0;top:1.5px;text-align:center;font-size:11.5px;font-weight:bold;color:#c2c2c2">WR</div></div>
<div class="a" style="left:1093px;top:545px;width:37px;height:17px;border:2px solid #383838;border-radius:3px;background:#a2a2a2"><div class="t" style="left:0;right:0;top:1.5px;text-align:center;font-size:11.5px;font-weight:bold;color:#c2c2c2">RD</div></div>
<div class="a" style="left:15px;top:703px;width:1124px;height:6px;background:linear-gradient(#f0f0f0 0,#fbfbfb 2px,#f6f6f6 4px,#cfcfcf 6px)"></div>
<div class="a" style="left:15px;top:709px;width:1025px;height:171px;background:#f5f5f5;border:1px solid #b0b0b0;border-left-color:#8e99a5;border-right-color:#c8c8c8"></div>
<div class="a" style="left:1040px;top:709px;width:98px;height:171px;background:#a7a7a7"></div>
<div class="log" style="left:27px;top:717.0px;letter-spacing:.42px">16:19:29</div>
<div class="log" style="left:120px;top:717.0px;color:#262626;letter-spacing:0.16px">Get S.M.A.R.T. Log directory... OK.</div>
<div class="log" style="left:27px;top:744.1px;letter-spacing:.42px">16:19:46</div>
<div class="log" style="left:120px;top:744.1px;color:#262626;letter-spacing:0.11px">Получение паспорта накопителя... OK</div>
<div class="log" style="left:27px;top:771.2px;letter-spacing:.42px">16:19:46</div>
<div class="log" style="left:120px;top:771.2px;color:#262626;letter-spacing:0.08px">Recallibration... OK</div>
<div class="log" style="left:27px;top:798.3px;letter-spacing:.42px">16:19:46</div>
<div class="log" style="left:120px;top:798.3px;color:#262626;letter-spacing:0.12px">Starting Reading, LBA=0..976773167, QUICK, sequential access, timeout 10000ms</div>
<div class="log" style="left:27px;top:825.4px;letter-spacing:.42px">16:21:26</div>
<div class="log" style="left:120px;top:825.4px;color:#262626;letter-spacing:0.35px">*** Scan results: no warnings, no errors. Last block at 976773167 (500 GB), time 1 minutes 40 seconds.</div>
<div class="log" style="left:27px;top:852.5px;letter-spacing:.42px">16:21:26</div>
<div class="log" style="left:120px;top:852.5px;color:#2a2ac0;letter-spacing:0.2px">Speed: Maximum 196 MB/s. Average 143 MB/s. Minimum 90 MB/s. 458 points.</div>
<div class="a" style="left:1016px;top:710px;width:23px;height:169px;background:#f0f0f0;border-left:1px solid #e4e4e4"></div>
<svg class="a" style="left:1016px;top:709px" width="22" height="170"><path d="M7 17l4.5 -4.5 4.5 4.5z" fill="#555"/><path d="M7 156l4.5 4.5 4.5 -4.5z" fill="#555"/></svg>
<div class="a" style="left:1017px;top:817px;width:20px;height:37px;border:1px solid #a0a0a0;border-radius:3px;background:linear-gradient(90deg,#f8f8f8,#dcdcdc)"></div>
<svg class="a" style="left:1017px;top:817px" width="20" height="37"><path d="M6 14.5h8M6 17.5h8M6 20.5h8M6 23.5h8" stroke="#777" stroke-width="1"/></svg>
<div class="cb" style="left:1054px;top:722px;width:15px;height:15px"><svg width="12" height="12" viewBox="0 0 12 12"><path d="M2.5 5.5l2.5 4 4.5 -8" fill="none" stroke="#3a56b0" stroke-width="2"/></svg></div>
<div class="t" style="left:1078px;top:722.5px;font-size:15.2px;color:#222">Звук</div>
<div class="cb" style="left:1054px;top:753px;width:15px;height:15px"><svg width="12" height="12" viewBox="0 0 12 12"><path d="M2.5 5.5l2.5 4 4.5 -8" fill="none" stroke="#3a56b0" stroke-width="2"/></svg></div>
<div class="t" style="left:1078px;top:753.5px;font-size:15.2px;color:#222">Hints</div>
</body></html>
